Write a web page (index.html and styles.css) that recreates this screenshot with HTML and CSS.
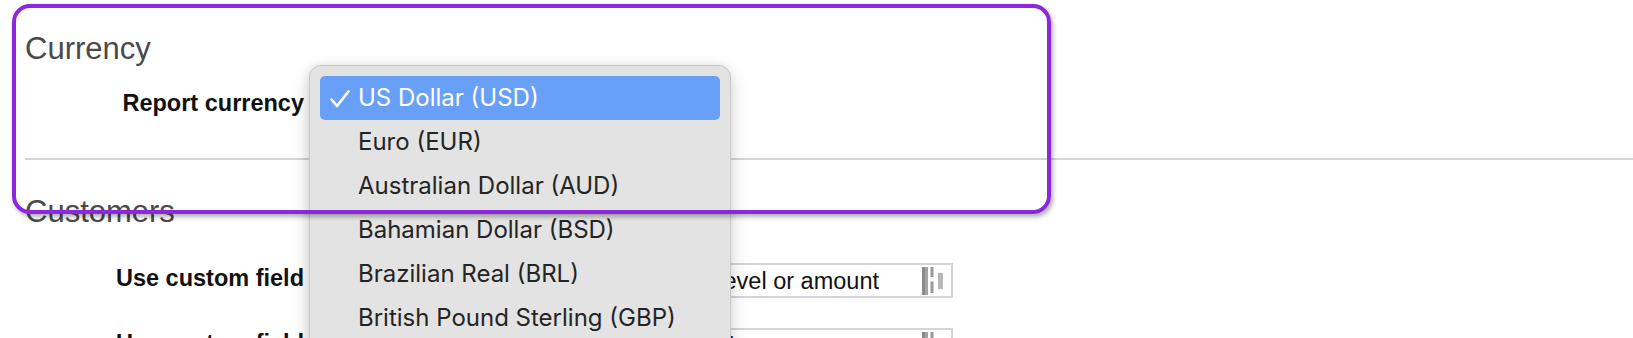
FILE: index.html
```html
<!DOCTYPE html>
<html lang="en">
<head>
<meta charset="utf-8">
<title>Settings</title>
<link rel="stylesheet" href="styles.css">
</head>
<body>
<main class="settings">
  <section class="group">
    <h2 class="group-title">Currency</h2>
    <div class="field-row">
      <label class="field-label">Report currency</label>
      <div class="select select-short">
        <span class="select-value">US Dollar (USD)</span>
      </div>
    </div>
  </section>
  <hr class="divider">
  <section class="group">
    <h2 class="group-title title-second">Customers</h2>
    <div class="field-row row-first">
      <label class="field-label">Use custom field</label>
      <div class="select">
        <span class="select-value">Customer level or amount</span>
        <svg class="select-icon" viewBox="0 0 21 28" width="21" height="28" aria-hidden="true">
          <rect x="0" y="0" width="3" height="28" fill="#8a8a8a"/>
          <rect x="3" y="0" width="3" height="28" fill="#a3a3a3"/>
          <rect x="8.5" y="0" width="3" height="10" fill="#9a9a9a"/>
          <rect x="8.5" y="14.5" width="3" height="11.5" fill="#9a9a9a"/>
          <rect x="16" y="6" width="5" height="16" fill="#b8b8b8"/>
        </svg>
      </div>
    </div>
    <div class="field-row">
      <label class="field-label">Use custom field</label>
      <div class="select">
        <span class="select-value">Currency format or none</span>
        <svg class="select-icon" viewBox="0 0 21 28" width="21" height="28" aria-hidden="true">
          <rect x="0" y="0" width="3" height="28" fill="#8a8a8a"/>
          <rect x="3" y="0" width="3" height="28" fill="#a3a3a3"/>
          <rect x="8.5" y="0" width="3" height="10" fill="#9a9a9a"/>
          <rect x="8.5" y="14.5" width="3" height="11.5" fill="#9a9a9a"/>
          <rect x="16" y="6" width="5" height="16" fill="#b8b8b8"/>
        </svg>
      </div>
    </div>
  </section>
</main>

<ul class="popup-menu" role="listbox">
  <li class="menu-item is-selected" role="option">
    <svg class="check" viewBox="0 0 20 18" width="20" height="18" aria-hidden="true">
      <path d="M1.5 9.5 L7 16 L18.5 1.5" fill="none" stroke="#ffffff" stroke-width="2.6" stroke-linecap="round" stroke-linejoin="round"/>
    </svg>
    <span>US Dollar (USD)</span>
  </li>
  <li class="menu-item" role="option"><span>Euro (EUR)</span></li>
  <li class="menu-item" role="option"><span>Australian Dollar (AUD)</span></li>
  <li class="menu-item" role="option"><span>Bahamian Dollar (BSD)</span></li>
  <li class="menu-item" role="option"><span>Brazilian Real (BRL)</span></li>
  <li class="menu-item" role="option"><span>British Pound Sterling (GBP)</span></li>
  <li class="menu-item" role="option"><span>Bulgarian Lev (BGN)</span></li>
</ul>

<div class="highlight-box" aria-hidden="true"></div>
</body>
</html>
```

FILE: styles.css
```css
html, body {
  margin: 0;
  padding: 0;
  background: #ffffff;
}

body {
  width: 1633px;
  height: 338px;
  overflow: hidden;
  position: relative;
  font-family: "Liberation Sans", Arial, sans-serif;
  color: #111111;
}

.settings {
  padding: 31px 0 0 25px;
}

.group-title {
  margin: 0;
  font-size: 31px;
  line-height: 36px;
  font-weight: 400;
  color: #4a4a4a;
}

.title-second {
  margin-top: 34px;
}

.field-row {
  display: flex;
  align-items: flex-start;
  gap: 12px;
  margin-top: 21px;
}

.row-first {
  margin-top: 33px;
}

.field-row + .field-row {
  margin-top: 30px;
}

.field-label {
  width: 279px;
  flex: none;
  text-align: right;
  font-weight: 700;
  font-size: 23.5px;
  line-height: 28px;
  padding-top: 1px;
  color: #111111;
}

.select {
  width: 637px;
  height: 35px;
  box-sizing: border-box;
  border: 2px solid #d4d4d4;
  display: flex;
  align-items: center;
  background: #ffffff;
}

.select-short {
  width: 260px;
}

.select-value {
  flex: 1;
  overflow: hidden;
  white-space: nowrap;
  text-align: right;
  font-size: 23.5px;
  line-height: 28px;
  color: #111111;
}

.select-icon {
  flex: none;
  margin: 0 8px 0 43px;
}

.divider {
  margin: 35px 0 0 0;
  border: 0;
  height: 2px;
  background: #d4d4d4;
}

/* Open dropdown menu (overlays the form) */
.popup-menu {
  position: absolute;
  left: 309px;
  top: 65px;
  width: 422px;
  height: 320px;
  box-sizing: border-box;
  margin: 0;
  padding: 10px;
  list-style: none;
  background: #e3e3e3;
  border: 1px solid #c9c9c9;
  border-radius: 12px;
  box-shadow: 0 6px 18px rgba(0, 0, 0, 0.18), -2px 0 8px rgba(0, 0, 0, 0.06);
  font-family: Inter, "Noto Sans", sans-serif;
  font-size: 24px;
  color: #242424;
}

.menu-item {
  display: flex;
  align-items: center;
  height: 44px;
  padding-left: 38px;
  border-radius: 5px;
  position: relative;
  white-space: nowrap;
}

.menu-item span {
  line-height: 44px;
  margin-top: -1px;
}

.menu-item.is-selected {
  background: #69a0f7;
  color: #ffffff;
}

.check {
  position: absolute;
  left: 10px;
  top: 14px;
}

/* Purple annotation frame */
.highlight-box {
  position: absolute;
  left: 12px;
  top: 4px;
  width: 1039px;
  height: 210px;
  box-sizing: border-box;
  border: 4px solid #8d26de;
  border-radius: 18px;
  box-shadow: 2px 3px 4px rgba(0, 0, 0, 0.3);
  pointer-events: none;
}
```
